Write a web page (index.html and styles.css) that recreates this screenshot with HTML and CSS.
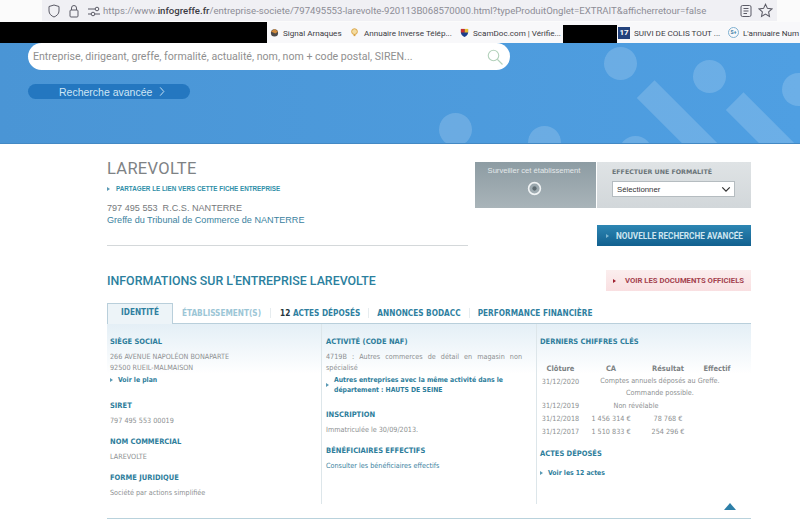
FILE: index.html
```html
<!DOCTYPE html>
<html lang="fr">
<head>
    <meta charset="UTF-8">
    <title>LAREVOLTE - Infogreffe</title>
    <link rel="stylesheet" href="styles.css">
</head>
<body>

    <div class="url-row">
        <div class="url-bar">
            <svg class="tool-icon" viewBox="0 0 14 14"><path d="M7 1 L12 2.500 V7 C12 10 9.500 12 7 13 C4.500 12 2 10 2 7 V2.500 Z"/></svg>
            <svg class="tool-icon" viewBox="0 0 14 14"><rect x="3" y="6" width="8" height="7" rx="1"/><path d="M4.500 6 V4 A2.500 2.500 0 0 1 9.500 4 V6"/></svg>
            <svg class="tool-icon sliders" viewBox="0 0 14 14"><path d="M1 5 H8 M1 10 H4 M8 10 H13"/><circle cx="10" cy="5" r="1.800"/><circle cx="6" cy="10" r="1.800"/></svg>
            <span class="url">https://www.<b>infogreffe.fr</b>/entreprise-societe/797495553-larevolte-920113B068570000.html?typeProduitOnglet=EXTRAIT&amp;afficherretour=false</span>
            <svg class="tool-icon reader" viewBox="0 0 14 14"><rect x="2" y="1.500" width="10" height="11" rx="1.500"/><path d="M4.500 4.500 H9.500 M4.500 7 H9.500 M4.500 9.500 H8"/></svg>
            <svg class="tool-icon star" viewBox="0 0 14 14"><path d="M7 1.200 L8.800 5 L13 5.500 L9.900 8.300 L10.700 12.500 L7 10.400 L3.300 12.500 L4.100 8.300 L1 5.500 L5.200 5 Z"/></svg>
        </div>
    </div>

    <div class="bookmarks">
        <div class="blackout blackout-left"></div>
        <div class="bookmark bm-signal"><svg viewBox="0 0 10 10"><circle cx="5" cy="5.500" r="4" fill="#4d4a48"/><path d="M1 4 L5 1 L9 4 L6 6 Z" fill="#d08a3c"/></svg>Signal Arnaques</div>
        <div class="bookmark bm-annuaire"><svg viewBox="0 0 10 10"><circle cx="5" cy="4" r="3.200" fill="#f4dca0" stroke="#d8a040"/><rect x="4" y="7" width="2" height="2" fill="#d8a040"/></svg>Annuaire Inverse Télép...</div>
        <div class="bookmark bm-scam"><svg viewBox="0 0 10 10"><path d="M1 1 H9 V5 C9 7.500 7 9 5 10 C3 9 1 7.500 1 5 Z" fill="#1c3f8c"/><path d="M5 1 H9 V5 H5 Z" fill="#e8c030"/><path d="M1 1 H5 V5 H1 Z" fill="#c83030"/></svg>ScamDoc.com | Vérifie...</div>
        <div class="blackout blackout-mid"></div>
        <div class="bookmark bm-colis"><span class="colis-icon">17</span>SUIVI DE COLIS TOUT ...</div>
        <div class="bookmark bm-num"><span class="num-icon">S+</span>L'annuaire Num</div>
    </div>

    <div class="hero">
        <div class="shape circle c1"></div>
        <div class="shape circle c2"></div>
        <div class="shape circle c3"></div>
        <div class="shape circle c4"></div>
        <div class="shape circle c5"></div>
        <div class="shape circle c6"></div>
        <div class="shape bar b1"></div>
        <div class="shape bar b2"></div>
        <div class="search">
            <span>Entreprise, dirigeant, greffe, formalité, actualité, nom, nom + code postal, SIREN...</span>
            <svg viewBox="0 0 24 24"><circle cx="10" cy="10" r="7"/><path d="M15 15 L22 22"/></svg>
        </div>
        <div class="advanced">Recherche avancée <svg viewBox="0 0 8 12"><path d="M2 1.500 L6 6 L2 10.500"/></svg></div>
    </div>

    <div class="main">
        <div class="top">
            <div class="identity">
                <h1>LAREVOLTE</h1>
                <a class="share"><i class="arrow"></i>PARTAGER LE LIEN VERS CETTE FICHE ENTREPRISE</a>
                <p class="rcs">797 495 553&nbsp; R.C.S. NANTERRE</p>
                <p class="greffe">Greffe du Tribunal de Commerce de NANTERRE</p>
            </div>
            <div class="actions">
                <div class="panel">
                    <div class="watch">
                        <span>Surveiller cet établissement</span>
                        <svg viewBox="0 0 14 14"><circle cx="7" cy="7" r="5.500"/><circle class="dot" cx="7" cy="7" r="2"/></svg>
                    </div>
                    <div class="formality">
                        <span>EFFECTUER UNE FORMALITÉ</span>
                        <div class="select">Sélectionner <svg viewBox="0 0 12 8"><path d="M1.500 1.500 L6 6 L10.500 1.500"/></svg></div>
                    </div>
                </div>
                <a class="new-search"><i class="arrow"></i>NOUVELLE RECHERCHE AVANCÉE</a>
            </div>
        </div>

        <div class="info-head">
            <h2>INFORMATIONS SUR L'ENTREPRISE LAREVOLTE</h2>
            <a class="docs"><i class="arrow"></i>VOIR LES DOCUMENTS OFFICIELS</a>
        </div>

        <div class="tabs">
            <div class="tab active">IDENTITÉ</div>
            <div class="tab faded">ÉTABLISSEMENT(S)</div>
            <div class="tab counted"><span>12</span> ACTES DÉPOSÉS</div>
            <div class="tab">ANNONCES BODACC</div>
            <div class="tab last">PERFORMANCE FINANCIÈRE</div>
        </div>

        <div class="columns">
            <div class="col">
                <h3>SIÈGE SOCIAL</h3>
                <p>266 AVENUE NAPOLÉON BONAPARTE<br>92500 RUEIL-MALMAISON</p>
                <a class="link"><i class="arrow"></i>Voir le plan</a>
                <h3 class="sp1">SIRET</h3>
                <p>797 495 553 00019</p>
                <h3 class="sp2">NOM COMMERCIAL</h3>
                <p>LAREVOLTE</p>
                <h3 class="sp2">FORME JURIDIQUE</h3>
                <p>Société par actions simplifiée</p>
            </div>
            <div class="col">
                <h3>ACTIVITÉ (CODE NAF)</h3>
                <p><span class="naf">4719B : Autres commerces de détail en magasin non</span><br>spécialisé</p>
                <a class="link wrap"><i class="arrow"></i><span>Autres entreprises avec la même activité dans le département : HAUTS DE SEINE</span></a>
                <h3 class="sp5">INSCRIPTION</h3>
                <p>Immatriculée le 30/09/2013.</p>
                <h3 class="sp2">BÉNÉFICIAIRES EFFECTIFS</h3>
                <p class="teal">Consulter les bénéficiaires effectifs</p>
            </div>
            <div class="col">
                <h3>DERNIERS CHIFFRES CLÉS</h3>
                <div class="figures">
                    <b>Clôture</b><b>CA</b><b>Résultat</b><b>Effectif</b>
                    <span>31/12/2020</span><span class="note">Comptes annuels déposés au Greffe.<br>Commande possible.</span>
                    <span>31/12/2019</span><span class="note short">Non révélable</span>
                    <span>31/12/2018</span><span>1 456 314 €</span><span>78 768 €</span><span></span>
                    <span>31/12/2017</span><span>1 510 833 €</span><span>254 296 €</span><span></span>
                </div>
                <h3 class="sp3">ACTES DÉPOSÉS</h3>
                <a class="link sp4"><i class="arrow"></i>Voir les 12 actes</a>
                <svg class="up" viewBox="0 0 12 7"><path d="M6 0 L12 7 H0 Z"/></svg>
            </div>
        </div>
        <div class="bottom-line"></div>
    </div>

</body>
</html>
```

FILE: styles.css
```css
* {
    box-sizing: border-box;
}
body {
    margin: 0;
    height: 521px;
    overflow: hidden;
    background-color: #ffffff;
    font-family: "DejaVu Sans", sans-serif;
    color: #8a8d8f;
}
h1, h2, h3, p {
    margin: 0;
}

/* browser chrome */
.url-row {
    height: 22px;
    padding-left: 42px;
    padding-right: 23px;
    background-color: #fbfbfb;
}
.url-bar {
    height: 21px;
    display: flex;
    align-items: center;
    padding-left: 5px;
    background-color: #f0f0f4;
}
.tool-icon {
    flex: none;
    width: 14px;
    height: 14px;
    margin-right: 6px;
    fill: none;
    stroke: #5b5b66;
    stroke-width: 1;
}
.sliders {
    margin-right: 0;
}
.url {
    margin-left: 2px;
    width: 635px;
    flex: none;
    white-space: nowrap;
    font-family: Roboto, sans-serif;
    font-size: 9.600px;
    color: #8d8d96;
}
.url b {
    font-weight: 500;
    color: #3c3c44;
}
.reader {
    margin-left: 1px;
    margin-right: 5px;
}
.star {
    width: 15px;
    height: 15px;
}
.bookmarks {
    height: 21px;
    display: flex;
    align-items: center;
    background-color: #f8f8fa;
    font-family: Roboto, sans-serif;
    font-size: 8.100px;
    color: #3a3a42;
    white-space: nowrap;
}
.blackout {
    flex: none;
    background-color: #000000;
}
.blackout-left {
    width: 267px;
    height: 21px;
}
.blackout-mid {
    align-self: flex-end;
    width: 54px;
    height: 18px;
    margin-right: 1px;
}
.bookmark {
    display: flex;
    align-items: center;
    flex: none;
}
.bookmark svg {
    flex: none;
    width: 9px;
    height: 9px;
    margin-right: 4px;
}
.bm-signal {
    margin-left: 3px;
    width: 80px;
}
.bm-annuaire {
    width: 110px;
}
.bm-annuaire svg {
    margin-right: 5px;
}
.bm-scam {
    width: 103px;
}
.bm-colis {
    width: 110px;
}
.colis-icon {
    width: 12px;
    height: 12px;
    margin-right: 4px;
    background-color: #23427c;
    color: #ffffff;
    font-size: 8px;
    font-weight: 700;
    line-height: 12px;
    text-align: center;
}
.bm-num {
    width: 72px;
    overflow: hidden;
}
.num-icon {
    flex: none;
    width: 11px;
    height: 11px;
    margin-right: 4px;
    border: 1px solid #7fb0d0;
    border-radius: 50%;
    color: #3d7ea6;
    font-size: 5px;
    font-weight: 700;
    line-height: 9px;
    text-align: center;
}

/* blue banner */
.hero {
    position: relative;
    height: 101px;
    overflow: hidden;
    background: linear-gradient(90deg, #4a95d5, #4f9fe2);
    border-bottom: 1px solid #4389c4;
}
.shape {
    position: absolute;
    background-color: rgba(255, 255, 255, 0.17);
}
.circle {
    width: 33px;
    height: 33px;
    border-radius: 50%;
}
.c1 { left: 604px; top: 4px; }
.c2 { left: 693px; top: 17px; }
.c3 { left: 782px; top: 30px; }
.c4 { left: 439px; top: 70px; }
.c5 { left: 528px; top: 83px; }
.c6 { left: 619px; top: 93px; }
.bar {
    width: 25px;
    height: 90px;
    transform: rotate(-45deg);
}
.b1 { left: 665px; top: 33px; }
.b2 { left: 754px; top: 45px; }
.search {
    position: relative;
    margin-left: 28px;
    width: 482px;
    height: 27px;
    padding: 0 6px 0 5px;
    display: flex;
    align-items: center;
    justify-content: space-between;
    background-color: #ffffff;
    border-radius: 14px;
    font-family: Roboto, sans-serif;
    font-size: 10.600px;
    color: #8f8f8f;
}
.search svg {
    width: 18px;
    height: 18px;
    fill: none;
    stroke: #b4d2bc;
    stroke-width: 1.500;
}
.advanced {
    position: relative;
    margin: 14px 0 0 28px;
    width: 162px;
    height: 15px;
    padding-left: 31px;
    display: flex;
    align-items: center;
    background-color: #2477c0;
    border-radius: 8px;
    font-family: "Liberation Sans", sans-serif;
    font-size: 10.500px;
    color: #cfe6f5;
}
.advanced svg {
    width: 8px;
    height: 11px;
    margin-left: 6px;
    fill: none;
    stroke: #cfe6f5;
    stroke-width: 1;
}

/* page body */
.main {
    width: 644px;
    margin-left: 107px;
}
.top {
    display: flex;
    justify-content: space-between;
    height: 102px;
    padding-top: 18px;
}
.identity {
    width: 361px;
    height: 84px;
    border-bottom: 1px solid #d4d8da;
}
.identity h1 {
    margin-top: -2px;
    font-family: Roboto, sans-serif;
    font-size: 16.500px;
    font-weight: 400;
    line-height: 17px;
    letter-spacing: 0.300px;
    color: #7e8285;
}
.arrow {
    display: inline-block;
    width: 0;
    height: 0;
    margin-right: 6px;
    border-left: 3px solid #5a9ab5;
    border-top: 2px solid transparent;
    border-bottom: 2px solid transparent;
}
.share {
    display: block;
    margin-top: 8px;
    font-family: "Liberation Sans", sans-serif;
    font-size: 6.300px;
    font-weight: 700;
    line-height: 8px;
    color: #2f8fa8;
}
.rcs, .greffe {
    font-family: "Liberation Sans", sans-serif;
    font-size: 9.100px;
    line-height: 12px;
}
.rcs {
    margin-top: 9px;
    color: #75797c;
}
.greffe {
    color: #3b82a0;
}
.actions {
    width: 276px;
    display: flex;
    flex-direction: column;
    align-items: flex-end;
}
.panel {
    width: 276px;
    height: 46px;
    display: flex;
}
.watch {
    width: 122px;
    padding: 4px 3px 0 0;
    display: flex;
    flex-direction: column;
    align-items: center;
    border-right: 1px solid #ffffff;
    background: linear-gradient(#8d9ca3, #a9b4b9);
    font-family: "Liberation Sans", sans-serif;
    font-size: 7.600px;
    color: #e4e9eb;
    white-space: nowrap;
}
.watch svg {
    width: 15px;
    height: 15px;
    margin-top: 6px;
    fill: none;
    stroke: #f0f3f4;
    stroke-width: 1.500;
}
.watch .dot {
    fill: #5f6c72;
    stroke: none;
}
.formality {
    flex: 1;
    padding: 6px 16px 0 15px;
    background: linear-gradient(#dfe3e5, #d2d7da);
    font-family: "DejaVu Sans", sans-serif;
    font-size: 6.300px;
    font-weight: 700;
    color: #6a7478;
}
.select {
    height: 16px;
    margin-top: 6px;
    padding: 0 3px 0 4px;
    display: flex;
    align-items: center;
    justify-content: space-between;
    background-color: #ffffff;
    border: 1px solid #b5bcc0;
    font-family: "Liberation Sans", sans-serif;
    font-size: 7.800px;
    font-weight: 400;
    color: #333333;
}
.select svg {
    width: 10px;
    height: 7px;
    fill: none;
    stroke: #333333;
    stroke-width: 1.500;
}
.new-search {
    width: 154px;
    height: 21px;
    margin-top: 17px;
    display: flex;
    align-items: center;
    padding-left: 9px;
    background: linear-gradient(#2d86b3, #12608f);
    font-family: Roboto, sans-serif;
    font-size: 8.200px;
    font-weight: 700;
    white-space: nowrap;
    color: #cfe6f0;
}
.new-search .arrow {
    border-left-color: #7db5d0;
    margin-right: 7px;
}
.info-head {
    height: 57px;
    padding-top: 24px;
    display: flex;
    justify-content: space-between;
}
.info-head h2 {
    font-family: Roboto, sans-serif;
    font-size: 12.400px;
    font-weight: 500;
    line-height: 22px;
    color: #2b7f9e;
}
.docs {
    width: 145px;
    height: 21px;
    display: flex;
    align-items: center;
    padding-left: 7px;
    background: linear-gradient(#fbeeee, #f9dfe1);
    font-family: Roboto, sans-serif;
    font-size: 7.700px;
    font-weight: 700;
    white-space: nowrap;
    color: #a4424f;
}
.docs .arrow {
    border-left-color: #a02030;
    margin-right: 9px;
}

/* tabs */
.tabs {
    height: 21px;
    display: flex;
    align-items: center;
    border-bottom: 1px solid #b9cfdb;
    font-family: "DejaVu Sans", sans-serif;
    font-stretch: condensed;
    font-size: 8.200px;
    font-weight: 700;
    color: #2f7f9f;
}
.tab {
    padding: 0 8px;
    border-right: 1px solid #e6ecef;
    white-space: nowrap;
}
.tab.last {
    border-right: 0;
}
.tab.active {
    width: 66px;
    height: 21px;
    padding: 3px 0 0;
    margin-bottom: -1px;
    text-align: center;
    border: 1px solid #b9cfdb;
    border-bottom: 0;
    background-color: #edf4f8;
}
.tab.faded {
    padding-left: 9px;
    padding-right: 9px;
    color: #9cc6d6;
}
.tab.counted {
    padding-left: 9px;
}
.tab.counted span {
    color: #23343d;
}

/* three columns */
.columns {
    height: 194px;
    display: grid;
    grid-template-columns: 215px 215px 214px;
    background: linear-gradient(#e4eff6, #ffffff 50px);
}
.col {
    position: relative;
    height: 180px;
    padding: 13px 4px 0 3px;
    border-right: 1px solid #dde6ea;
    font-family: "DejaVu Sans", sans-serif;
    font-stretch: condensed;
    font-size: 7.200px;
}
.col:nth-child(2) {
    padding-left: 4px;
}
.col:last-child {
    border-right: 0;
}
.col h3 {
    font-size: 7.500px;
    line-height: 10px;
    font-weight: 700;
    color: #2d7d9b;
}
.col p {
    margin-top: 4px;
    line-height: 11px;
    color: #8c8f91;
}
.col .naf {
    word-spacing: 3px;
}
.col .teal {
    color: #3b82a0;
}
.col h3.sp1 {
    margin-top: 16px;
}
.col h3.sp2 {
    margin-top: 11px;
}
.col h3.sp3 {
    margin-top: 11px;
}
.col h3.sp5 {
    margin-top: 15px;
}
.link {
    display: block;
    margin-top: 2px;
    font-size: 6.800px;
    font-weight: 700;
    line-height: 10px;
    color: #2d7d9b;
}
.link .arrow {
    margin-right: 5px;
}
.link.wrap {
    display: flex;
    align-items: center;
}
.sp4 {
    margin-top: 9px;
}
.figures {
    margin-top: 15px;
    display: grid;
    grid-template-columns: 41px 60px 54px 44px;
    line-height: 13px;
    text-align: center;
    color: #8c8f91;
}
.figures b {
    font-size: 7.500px;
    color: #7d8284;
}
.note {
    grid-column: 2 / 5;
    line-height: 12px;
}
.note.short {
    padding-right: 48px;
    line-height: 13px;
}
.up {
    position: absolute;
    right: 15px;
    bottom: -6px;
    width: 12px;
    height: 7px;
    fill: #2d7fa8;
}
.bottom-line {
    height: 1px;
    background-color: #b9d2dc;
}
```
